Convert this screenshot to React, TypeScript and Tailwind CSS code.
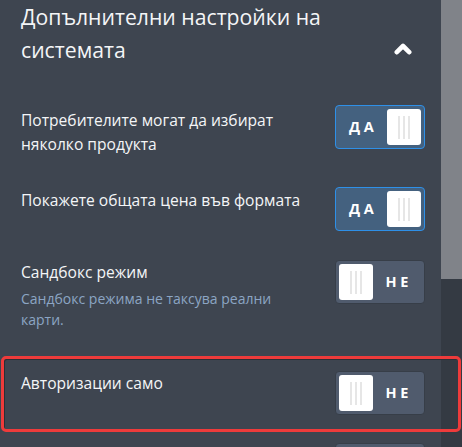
import React from 'react';

const font = { fontFamily: '"Open Sans", "Noto Sans", sans-serif' };

const Knob = () => (
  <div className="flex h-[36px] w-[34px] items-center justify-center gap-[3px] rounded-[3px] bg-white">
    <span className="h-[23px] w-[2px] bg-[#e6e6e6]" />
    <span className="h-[23px] w-[2px] bg-[#e6e6e6]" />
    <span className="h-[23px] w-[2px] bg-[#e6e6e6]" />
  </div>
);

const Toggle = ({ on, label = true }: { on: boolean; label?: boolean }) =>
  on ? (
    <div className="flex h-[44px] w-[90px] shrink-0 items-center justify-between rounded-[4px] border border-[#2e90e8] bg-[#44617f] pl-[13px] pr-[3px]">
      <span className="text-[14.5px] font-bold tracking-[0.25em] text-white">ДА</span>
      <Knob />
    </div>
  ) : (
    <div className="flex h-[44px] w-[90px] shrink-0 items-center justify-between rounded-[4px] border border-[#373e48] bg-[#505b6d] pl-[3px] pr-[12px]">
      <Knob />
      {label && <span className="text-[14.5px] font-bold tracking-[0.25em] text-white">НЕ</span>}
    </div>
  );

export default function App() {
  return (
    <div className="relative flex h-[447px] w-[462px] overflow-hidden bg-[#3e4550]" style={font}>
      <div className="flex w-[441px] flex-col pl-[21px] pr-[16px]">
        <div className="flex items-end justify-between pr-[13px]">
          <h2 className="text-[21.2px] leading-[33px] font-normal text-[#f4f5f7]">
            Допълнителни настройки на
            <br />
            системата
          </h2>
          <svg viewBox="0 0 18 13" width="18" height="13" className="mb-[11px]">
            <polyline
              points="2.8,10.2 9,4 15.2,10.2"
              fill="none"
              stroke="white"
              strokeWidth="4.6"
              strokeLinecap="round"
              strokeLinejoin="round"
            />
          </svg>
        </div>
        <div className="mt-[12px] mr-[7px] h-px bg-[#56606d]" />

        <div className="mt-[27px] flex items-start justify-between">
          <p className="w-[290px] pt-[3px] text-[15.6px] leading-[24px] text-[#f4f5f7]">
            Потребителите могат да избират няколко продукта
          </p>
          <Toggle on />
        </div>

        <div className="mt-[31px] flex items-start justify-between">
          <p className="w-[290px] pt-[1px] text-[15.6px] leading-[24px] text-[#f4f5f7]">
            Покажете общата цена във формата
          </p>
          <Toggle on />
        </div>

        <div className="mt-[29px] flex items-start justify-between">
          <div className="w-[290px]">
            <p className="text-[15.6px] leading-[24px] text-[#f4f5f7]">Сандбокс режим</p>
            <p className="mt-[4px] text-[14px] leading-[21px] text-[#8ca5c4]">
              Сандбокс режима не таксува реални карти.
            </p>
          </div>
          <Toggle on={false} />
        </div>

        <div className="mt-[41px] flex items-start justify-between">
          <p className="w-[290px] text-[15.6px] leading-[24px] text-[#f4f5f7]">Авторизации само</p>
          <Toggle on={false} />
        </div>

        <div className="mt-[28px] flex items-start justify-end">
          <Toggle on={false} label={false} />
        </div>
      </div>

      <div className="flex w-[21px] flex-col bg-[#343a43]">
        <div className="h-[279px] bg-[#808389]" />
      </div>

      <div className="pointer-events-none absolute left-[1px] top-[356px] h-[76px] w-[460px] rounded-[5px] border-[3px] border-[#ee3b3b] shadow-[inset_1px_1px_0_#2a2f36]" />
    </div>
  );
}
